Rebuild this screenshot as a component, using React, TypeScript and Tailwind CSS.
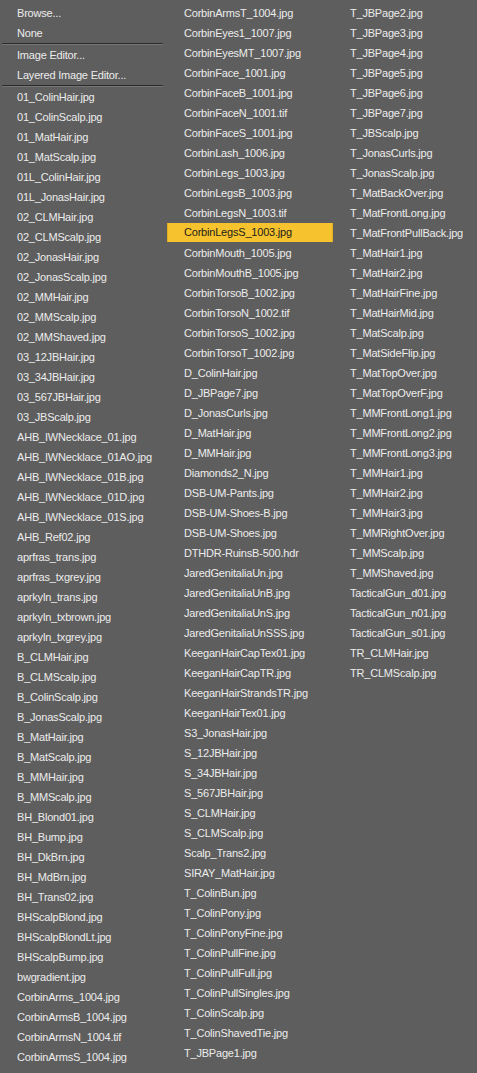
import React from "react";

const col1Top = ["Browse...", "None"];
const col1Mid = ["Image Editor...", "Layered Image Editor..."];
const col1 = [
  "01_ColinHair.jpg",
  "01_ColinScalp.jpg",
  "01_MatHair.jpg",
  "01_MatScalp.jpg",
  "01L_ColinHair.jpg",
  "01L_JonasHair.jpg",
  "02_CLMHair.jpg",
  "02_CLMScalp.jpg",
  "02_JonasHair.jpg",
  "02_JonasScalp.jpg",
  "02_MMHair.jpg",
  "02_MMScalp.jpg",
  "02_MMShaved.jpg",
  "03_12JBHair.jpg",
  "03_34JBHair.jpg",
  "03_567JBHair.jpg",
  "03_JBScalp.jpg",
  "AHB_IWNecklace_01.jpg",
  "AHB_IWNecklace_01AO.jpg",
  "AHB_IWNecklace_01B.jpg",
  "AHB_IWNecklace_01D.jpg",
  "AHB_IWNecklace_01S.jpg",
  "AHB_Ref02.jpg",
  "aprfras_trans.jpg",
  "aprfras_txgrey.jpg",
  "aprkyln_trans.jpg",
  "aprkyln_txbrown.jpg",
  "aprkyln_txgrey.jpg",
  "B_CLMHair.jpg",
  "B_CLMScalp.jpg",
  "B_ColinScalp.jpg",
  "B_JonasScalp.jpg",
  "B_MatHair.jpg",
  "B_MatScalp.jpg",
  "B_MMHair.jpg",
  "B_MMScalp.jpg",
  "BH_Blond01.jpg",
  "BH_Bump.jpg",
  "BH_DkBrn.jpg",
  "BH_MdBrn.jpg",
  "BH_Trans02.jpg",
  "BHScalpBlond.jpg",
  "BHScalpBlondLt.jpg",
  "BHScalpBump.jpg",
  "bwgradient.jpg",
  "CorbinArms_1004.jpg",
  "CorbinArmsB_1004.jpg",
  "CorbinArmsN_1004.tif",
  "CorbinArmsS_1004.jpg",
];

const col2 = [
  "CorbinArmsT_1004.jpg",
  "CorbinEyes1_1007.jpg",
  "CorbinEyesMT_1007.jpg",
  "CorbinFace_1001.jpg",
  "CorbinFaceB_1001.jpg",
  "CorbinFaceN_1001.tif",
  "CorbinFaceS_1001.jpg",
  "CorbinLash_1006.jpg",
  "CorbinLegs_1003.jpg",
  "CorbinLegsB_1003.jpg",
  "CorbinLegsN_1003.tif",
  "CorbinLegsS_1003.jpg",
  "CorbinMouth_1005.jpg",
  "CorbinMouthB_1005.jpg",
  "CorbinTorsoB_1002.jpg",
  "CorbinTorsoN_1002.tif",
  "CorbinTorsoS_1002.jpg",
  "CorbinTorsoT_1002.jpg",
  "D_ColinHair.jpg",
  "D_JBPage7.jpg",
  "D_JonasCurls.jpg",
  "D_MatHair.jpg",
  "D_MMHair.jpg",
  "Diamonds2_N.jpg",
  "DSB-UM-Pants.jpg",
  "DSB-UM-Shoes-B.jpg",
  "DSB-UM-Shoes.jpg",
  "DTHDR-RuinsB-500.hdr",
  "JaredGenitaliaUn.jpg",
  "JaredGenitaliaUnB.jpg",
  "JaredGenitaliaUnS.jpg",
  "JaredGenitaliaUnSSS.jpg",
  "KeeganHairCapTex01.jpg",
  "KeeganHairCapTR.jpg",
  "KeeganHairStrandsTR.jpg",
  "KeeganHairTex01.jpg",
  "S3_JonasHair.jpg",
  "S_12JBHair.jpg",
  "S_34JBHair.jpg",
  "S_567JBHair.jpg",
  "S_CLMHair.jpg",
  "S_CLMScalp.jpg",
  "Scalp_Trans2.jpg",
  "SIRAY_MatHair.jpg",
  "T_ColinBun.jpg",
  "T_ColinPony.jpg",
  "T_ColinPonyFine.jpg",
  "T_ColinPullFine.jpg",
  "T_ColinPullFull.jpg",
  "T_ColinPullSingles.jpg",
  "T_ColinScalp.jpg",
  "T_ColinShavedTie.jpg",
  "T_JBPage1.jpg",
];

const col3 = [
  "T_JBPage2.jpg",
  "T_JBPage3.jpg",
  "T_JBPage4.jpg",
  "T_JBPage5.jpg",
  "T_JBPage6.jpg",
  "T_JBPage7.jpg",
  "T_JBScalp.jpg",
  "T_JonasCurls.jpg",
  "T_JonasScalp.jpg",
  "T_MatBackOver.jpg",
  "T_MatFrontLong.jpg",
  "T_MatFrontPullBack.jpg",
  "T_MatHair1.jpg",
  "T_MatHair2.jpg",
  "T_MatHairFine.jpg",
  "T_MatHairMid.jpg",
  "T_MatScalp.jpg",
  "T_MatSideFlip.jpg",
  "T_MatTopOver.jpg",
  "T_MatTopOverF.jpg",
  "T_MMFrontLong1.jpg",
  "T_MMFrontLong2.jpg",
  "T_MMFrontLong3.jpg",
  "T_MMHair1.jpg",
  "T_MMHair2.jpg",
  "T_MMHair3.jpg",
  "T_MMRightOver.jpg",
  "T_MMScalp.jpg",
  "T_MMShaved.jpg",
  "TacticalGun_d01.jpg",
  "TacticalGun_n01.jpg",
  "TacticalGun_s01.jpg",
  "TR_CLMHair.jpg",
  "TR_CLMScalp.jpg",
];

const SELECTED = "CorbinLegsS_1003.jpg";

function Item({ label }: { label: string }) {
  if (label === SELECTED) {
    return (
      <div className="mb-[1px] h-[19px] leading-[19px] pl-[16px] bg-[#f6c22d] border-l border-r border-[#e2ae24] text-[#1c1c1c] whitespace-nowrap">
        {label}
      </div>
    );
  }
  return <div className="h-5 leading-5 pl-[17px] whitespace-nowrap">{label}</div>;
}

function Separator() {
  return <div className="ml-[2px] mr-[4px] h-[2px] border-t border-b border-t-[#2c2c2c] border-b-[#757575]" />;
}

export default function App() {
  return (
    <div
      className="flex w-full h-[1073px] overflow-hidden bg-[#5e5e5e] text-[#ececec] text-[11px] tracking-[-0.2px] pt-[3px]"
      style={{ fontFamily: '"Liberation Sans", Arial, sans-serif' }}
    >
      <div className="w-[167px] shrink-0 flex flex-col">
        {col1Top.map((l) => (
          <Item key={l} label={l} />
        ))}
        <Separator />
        {col1Mid.map((l) => (
          <Item key={l} label={l} />
        ))}
        <Separator />
        {col1.map((l) => (
          <Item key={l} label={l} />
        ))}
      </div>
      <div className="w-[166px] shrink-0 flex flex-col">
        {col2.map((l) => (
          <Item key={l} label={l} />
        ))}
      </div>
      <div className="flex-1 flex flex-col">
        {col3.map((l) => (
          <Item key={l} label={l} />
        ))}
      </div>
    </div>
  );
}
